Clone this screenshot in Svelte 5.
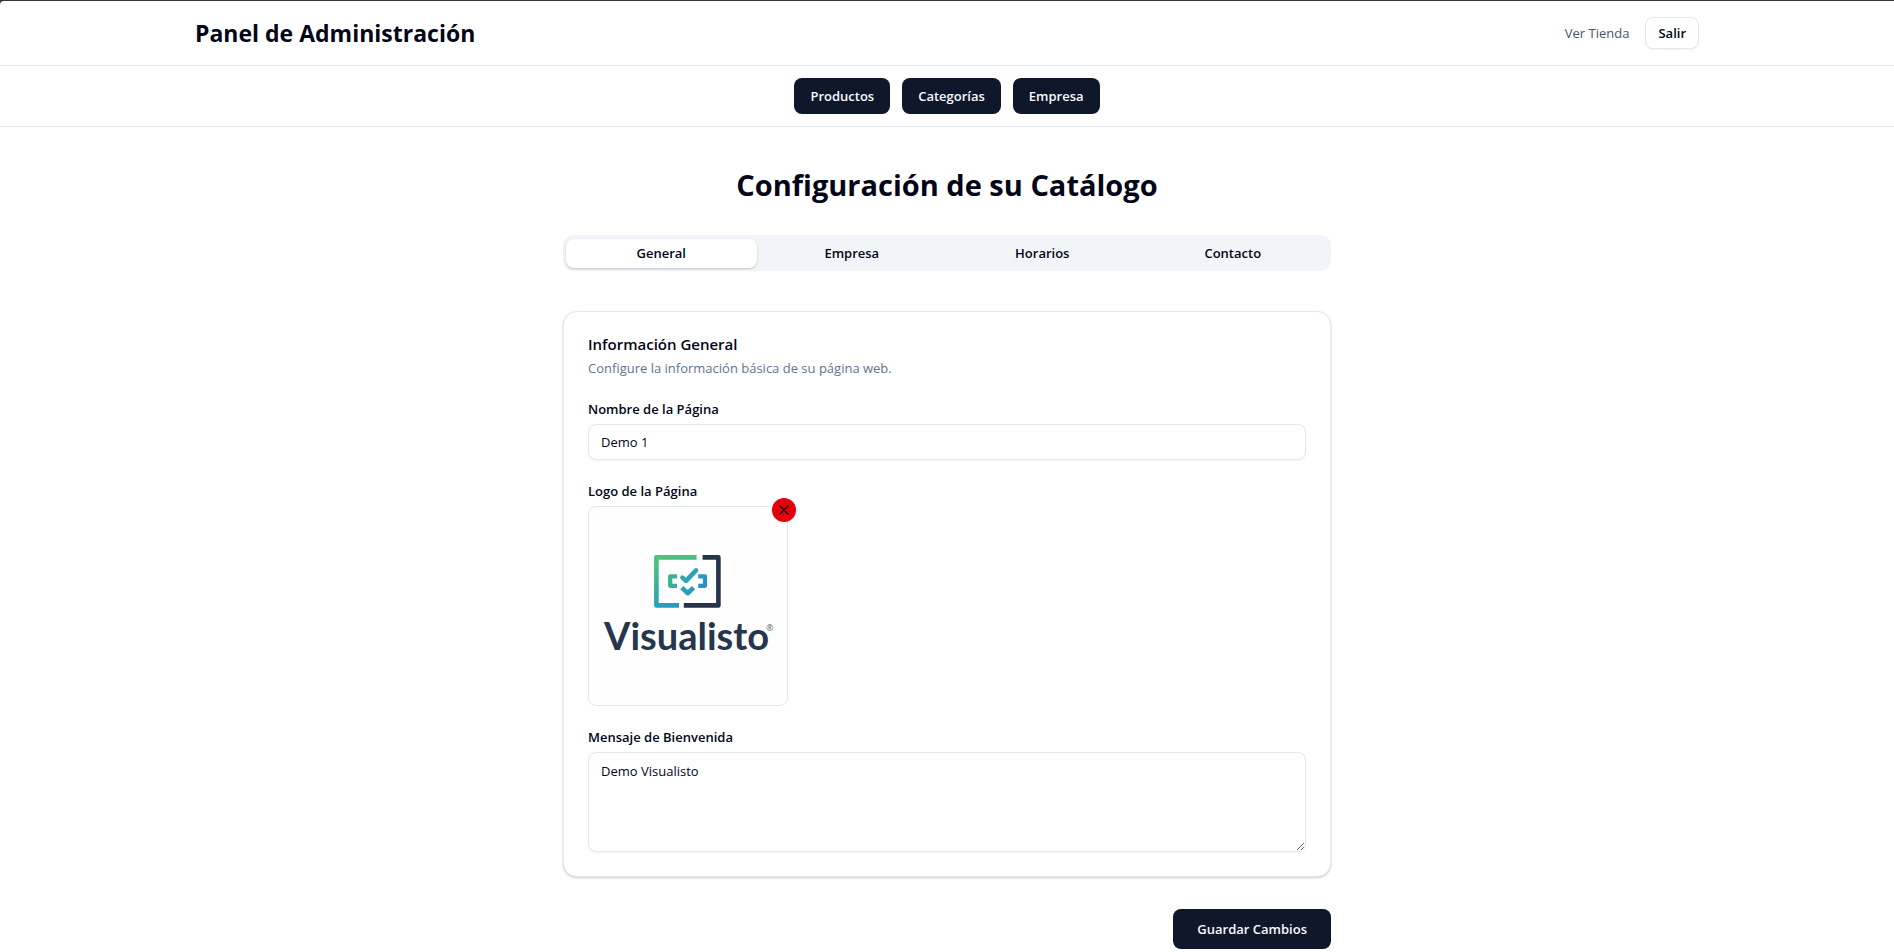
<script>
  const sections = ['Productos', 'Categorías', 'Empresa'];
  const tabs = ['General', 'Empresa', 'Horarios', 'Contacto'];

  let activeTab = $state('General');
  let pageName = $state('Demo 1');
  let welcome = $state('Demo Visualisto');
  let hasLogo = $state(true);
</script>

<div class="window">
  <div class="page">
    <header class="topbar">
      <div class="container">
        <h1 class="brand">Panel de Administración</h1>
        <div class="actions">
          <a class="store-link" href="#tienda">Ver Tienda</a>
          <button class="button outline" type="button">Salir</button>
        </div>
      </div>
    </header>

    <nav class="sections">
      {#each sections as section}
        <button class="button primary" type="button">{section}</button>
      {/each}
    </nav>

    <main class="content">
      <h2 class="heading">Configuración de su Catálogo</h2>

      <div class="tabs" role="tablist">
        {#each tabs as tab}
          <button
            class="tab"
            class:active={activeTab === tab}
            type="button"
            role="tab"
            aria-selected={activeTab === tab}
            onclick={() => (activeTab = tab)}>{tab}</button>
        {/each}
      </div>

      <form onsubmit={(e) => e.preventDefault()}>
        <section class="card">
          <div class="card-header">
            <h3>Información General</h3>
            <p>Configure la información básica de su página web.</p>
          </div>

          <div class="field">
            <label for="page-name">Nombre de la Página</label>
            <input id="page-name" type="text" bind:value={pageName} />
          </div>

          <div class="field">
            <span class="label">Logo de la Página</span>
            {#if hasLogo}
              <div class="logo-box">
                <svg viewBox="0 0 198 198" fill="none">
                  <defs>
                    <linearGradient id="frame" gradientUnits="userSpaceOnUse" x1="72" y1="50" x2="88" y2="104">
                      <stop offset="0" stop-color="#52c278" />
                      <stop offset="0.5" stop-color="#33b09c" />
                      <stop offset="1" stop-color="#2394d2" />
                    </linearGradient>
                    <linearGradient id="mark" gradientUnits="userSpaceOnUse" x1="82" y1="68" x2="112" y2="86">
                      <stop offset="0" stop-color="#3cb58c" />
                      <stop offset="0.5" stop-color="#28a4b4" />
                      <stop offset="1" stop-color="#2590d4" />
                    </linearGradient>
                  </defs>
                  <g stroke-width="4.6" stroke-linejoin="round">
                    <path stroke="url(#frame)" d="M107.6 50.4H67.4V98.4H90" />
                    <path stroke="#25344a" d="M113.6 50.4H129.4V98.4H94.8" />
                  </g>
                  <g stroke="url(#mark)" stroke-width="4.2" stroke-linejoin="round">
                    <path d="M88 69.4H81.2V78.8H88" />
                    <path d="M109.2 69.4H116V78.8H109.2" />
                    <g stroke-width="4.6">
                      <path stroke-linecap="round" d="M93.4 70.6L97 73.8L107 63.4" />
                      <path d="M92.8 80.6L98.6 86.2L104.6 80.6" />
                    </g>
                  </g>
                  <text class="wordmark" x="15" y="143">Visualisto</text>
                  <text class="registered" x="177" y="124">®</text>
                </svg>
                <button class="remove" type="button" aria-label="Quitar logo" onclick={() => (hasLogo = false)}>
                  <svg viewBox="0 0 16 16" fill="none" stroke="currentColor" stroke-width="1.4" stroke-linecap="round">
                    <path d="M4 4L12 12M12 4L4 12" />
                  </svg>
                </button>
              </div>
            {/if}
          </div>

          <div class="field">
            <label for="welcome">Mensaje de Bienvenida</label>
            <textarea id="welcome" bind:value={welcome}></textarea>
          </div>
        </section>

        <div class="form-actions">
          <button class="button primary large" type="submit">Guardar Cambios</button>
        </div>
      </form>
    </main>
  </div>
</div>

<style>
  :global(body) {
    margin: 0;
    background: #fff;
  }

  .window {
    padding-top: 1px;
    background: #363537;
    color: #020618;
    font-family: 'Open Sans', 'Noto Sans', sans-serif;
    font-size: 13px;
    line-height: 20px;
  }

  .window *,
  .window {
    box-sizing: border-box;
  }

  .page {
    min-height: calc(100vh - 1px);
    background: #fff;
    border-top-left-radius: 4px;
  }

  h1,
  h2,
  h3,
  p {
    margin: 0;
  }

  button,
  input,
  textarea {
    font: inherit;
    color: inherit;
  }

  button {
    cursor: pointer;
  }

  .topbar {
    border-bottom: 1px solid #e2e8f0;
  }

  .container {
    display: flex;
    align-items: center;
    justify-content: space-between;
    max-width: 1536px;
    height: 64px;
    margin: 0 auto;
    padding: 0 16px;
  }

  .brand {
    font-size: 23px;
    line-height: 32px;
    font-weight: 700;
  }

  .actions {
    display: flex;
    align-items: center;
    gap: 16px;
  }

  .store-link {
    color: #45556c;
    text-decoration: none;
  }

  .button {
    height: 36px;
    padding: 0 16px;
    border: 0;
    border-radius: 8px;
    font-weight: 600;
    white-space: nowrap;
  }

  .button.outline {
    height: 32px;
    padding: 0 12px;
    border: 1px solid #e2e8f0;
    background: #fff;
    box-shadow: 0 1px 2px rgba(0, 0, 0, 0.05);
  }

  .button.primary {
    background: #0f172b;
    color: #f8fafc;
  }

  .button.large {
    height: 40px;
    padding: 0 24px;
  }

  .sections {
    display: flex;
    justify-content: center;
    gap: 12px;
    padding: 12px 16px;
    border-bottom: 1px solid #e2e8f0;
  }

  .content {
    max-width: 768px;
    margin: 0 auto;
    padding-top: 40px;
  }

  .heading {
    margin-bottom: 32px;
    font-size: 29px;
    line-height: 36px;
    font-weight: 700;
    text-align: center;
  }

  .tabs {
    display: grid;
    grid-template-columns: repeat(4, 1fr);
    height: 36px;
    margin-bottom: 40px;
    padding: 4px 3px 3px;
    border-radius: 10px;
    background: #f1f5f9;
  }

  .tab {
    padding: 0 8px 2px;
    border: 0;
    border-radius: 8px;
    background: transparent;
    font-weight: 600;
  }

  .tab.active {
    background: #fff;
    box-shadow: 0 1px 3px rgba(0, 0, 0, 0.1), 0 1px 2px rgba(0, 0, 0, 0.1);
  }

  .card {
    display: flex;
    flex-direction: column;
    gap: 24px;
    padding: 24px;
    border: 1px solid #e2e8f0;
    border-radius: 14px;
    background: #fff;
    box-shadow: 0 1px 3px rgba(0, 0, 0, 0.1), 0 1px 2px rgba(0, 0, 0, 0.1);
  }

  .card-header {
    display: grid;
    gap: 6px;
  }

  .card-header h3 {
    font-size: 15px;
    line-height: 16px;
    font-weight: 600;
  }

  .card-header p {
    color: #62748e;
  }

  .field {
    display: flex;
    flex-direction: column;
    gap: 8px;
  }

  label,
  .label {
    line-height: 14px;
    font-weight: 600;
  }

  input,
  textarea {
    display: block;
    width: 100%;
    padding: 8px 12px;
    border: 1px solid #e2e8f0;
    border-radius: 8px;
    outline: 0;
    background: #fff;
    box-shadow: 0 1px 2px rgba(0, 0, 0, 0.05);
  }

  input {
    height: 36px;
  }

  textarea {
    height: 100px;
    resize: vertical;
  }

  .logo-box {
    position: relative;
    width: 200px;
    height: 200px;
    border: 1px solid #e2e8f0;
    border-radius: 8px;
    background: #fefefe;
  }

  .logo-box > svg {
    display: block;
    width: 100%;
  }

  .wordmark {
    fill: #26364c;
    font-family: Lato, sans-serif;
    font-size: 38px;
    font-weight: 700;
  }

  .registered {
    fill: #5b6675;
    font-family: 'Open Sans', sans-serif;
    font-size: 9px;
  }

  .remove {
    position: absolute;
    top: -9px;
    right: -9px;
    display: grid;
    place-items: center;
    width: 24px;
    height: 24px;
    padding: 0;
    border: 0;
    border-radius: 50%;
    background: #e7000b;
  }

  .remove svg {
    width: 16px;
    height: 16px;
  }

  .form-actions {
    display: flex;
    justify-content: flex-end;
    margin-top: 32px;
  }
</style>
